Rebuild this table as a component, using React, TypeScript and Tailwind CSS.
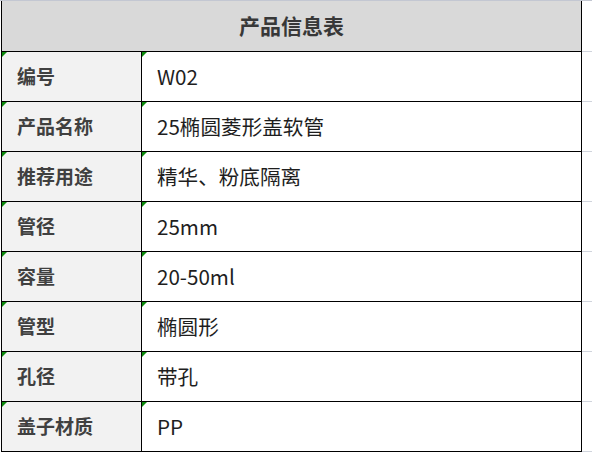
const rows: [string, string][] = [
  ["编号", "W02"],
  ["产品名称", "25椭圆菱形盖软管"],
  ["推荐用途", "精华、粉底隔离"],
  ["管径", "25mm"],
  ["容量", "20-50ml"],
  ["管型", "椭圆形"],
  ["孔径", "带孔"],
  ["盖子材质", "PP"],
];

function Marker() {
  return (
    <span className="absolute left-0 top-0 w-0 h-0 border-t-[5px] border-r-[5px] border-t-[#0b8a0b] border-r-transparent" />
  );
}

export default function App() {
  return (
    <div className="w-[592px] h-[453px] bg-white overflow-hidden font-['Noto_Sans_CJK_SC',sans-serif]">
      {/* sheet gridline above the table */}
      <div className="h-px bg-[#c3c7d2]" />

      <div className="flex">
        <div className="w-px" />

        {/* table */}
        <div className="w-[581px] border-x border-b border-black">
          <div className="h-[50px] bg-[#d9d9d9] flex items-center justify-center">
            <span className="text-[21px] font-bold text-[#383838]">产品信息表</span>
          </div>
          {rows.map(([label, value]) => (
            <div key={label} className="h-[50px] border-t border-black flex">
              <div className="relative w-[140px] border-r border-black bg-[#f2f2f2] flex items-center pl-[15px]">
                <Marker />
                <span className="text-[19px] font-bold text-[#404040]">{label}</span>
              </div>
              <div className="relative flex-1 flex items-center pl-[15px]">
                <Marker />
                <span className="text-[20.6px] text-[#1e1e1e]">{value}</span>
              </div>
            </div>
          ))}
        </div>

        {/* empty sheet cells to the right */}
        <div className="flex-1">
          <div className="h-[50px]" />
          {rows.map(([label]) => (
            <div key={label} className="h-[50px] border-t border-[#d0d4dc]" />
          ))}
          <div className="border-t border-[#d0d4dc]" />
        </div>
      </div>
    </div>
  );
}
